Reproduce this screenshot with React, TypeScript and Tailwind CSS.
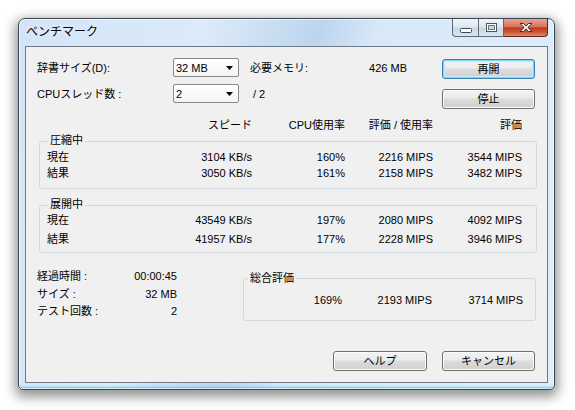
interface ResultRow {
  label: string;
  speed: string;
  usage: string;
  ratingPerUsage: string;
  rating: string;
}

const compressRows: ResultRow[] = [
  { label: "現在", speed: "3104 KB/s", usage: "160%", ratingPerUsage: "2216 MIPS", rating: "3544 MIPS" },
  { label: "結果", speed: "3050 KB/s", usage: "161%", ratingPerUsage: "2158 MIPS", rating: "3482 MIPS" },
];

const decompressRows: ResultRow[] = [
  { label: "現在", speed: "43549 KB/s", usage: "197%", ratingPerUsage: "2080 MIPS", rating: "4092 MIPS" },
  { label: "結果", speed: "41957 KB/s", usage: "177%", ratingPerUsage: "2228 MIPS", rating: "3946 MIPS" },
];

const stats = [
  { label: "経過時間 :", value: "00:00:45", gap: "" },
  { label: "サイズ :", value: "32 MB", gap: "mt-[4px]" },
  { label: "テスト回数 :", value: "2", gap: "mt-[3px]" },
];

const buttonBase =
  "flex h-[20px] items-center justify-center rounded-[3px] border bg-[linear-gradient(#f3f3f3_0%,#ebebeb_45%,#dddddd_50%,#cfcfcf_100%)]";

function Button({ label, isDefault = false, width = "w-[93px]" }: { label: string; isDefault?: boolean; width?: string }) {
  return (
    <div
      className={
        isDefault
          ? `${buttonBase} ${width} border-[#3c7fb1] shadow-[inset_0_0_0_1px_#7fd6f7,inset_0_0_0_2px_#c6ecfb]`
          : `${buttonBase} ${width} border-[#707070] shadow-[inset_0_0_0_1px_#fbfbfb]`
      }
    >
      {label}
    </div>
  );
}

function Dropdown({ value }: { value: string }) {
  return (
    <div className="flex h-[19px] w-[66px] items-center justify-between rounded-[2px] border border-[#8a8a8a] bg-[linear-gradient(#ffffff,#f4f4f4)] pl-[2px] pr-[5px]">
      <span>{value}</span>
      <svg width="7" height="4" viewBox="0 0 7 4">
        <path d="M0 0h7L3.5 4z" fill="#000" />
      </svg>
    </div>
  );
}

function Row({ row, height = "h-[16px]" }: { row: ResultRow; height?: string }) {
  return (
    <div className={`flex items-center ${height}`}>
      <span className="w-[100px]">{row.label}</span>
      <span className="w-[105px] text-right">{row.speed}</span>
      <span className="w-[93px] text-right">{row.usage}</span>
      <span className="w-[88px] text-right">{row.ratingPerUsage}</span>
      <span className="w-[89px] text-right">{row.rating}</span>
    </div>
  );
}

function CaptionButtons() {
  return (
    <div className="flex h-[18px]">
      <div className="flex w-[26px] items-end justify-center rounded-bl-[4px] border border-r-0 border-t-0 border-[#5c6977] bg-[linear-gradient(#eef4fa_0%,#dde7f1_48%,#c8d6e4_52%,#d9e5f1_100%)] pb-[3px]">
        <svg width="12" height="5" viewBox="0 0 12 5">
          <rect x="0.5" y="0.5" width="11" height="4" rx="1" fill="#fff" stroke="#3e4a57" />
        </svg>
      </div>
      <div className="flex w-[26px] items-center justify-center border border-t-0 border-[#5c6977] bg-[linear-gradient(#eef4fa_0%,#dde7f1_48%,#c8d6e4_52%,#d9e5f1_100%)]">
        <svg width="11" height="9" viewBox="0 0 11 9">
          <rect x="0.5" y="0.5" width="10" height="8" fill="#fff" stroke="#4a5866" />
          <rect x="2.5" y="2.5" width="6" height="4" fill="#c9d5e1" stroke="#6c7a88" />
        </svg>
      </div>
      <div className="flex w-[44px] items-center justify-center rounded-br-[4px] border border-l-0 border-t-0 border-[#5a2a22] bg-[linear-gradient(#e9a493_0%,#d9735c_45%,#c2391f_52%,#cf5a3c_80%,#e28a6c_100%)]">
        <svg width="16" height="11" viewBox="0 0 16 11">
          <path
            d="M2 1.5h3.5L8 4.2l2.5-2.7H14L9.8 5.5 14 9.5h-3.5L8 6.8 5.5 9.5H2l4.2-4z"
            fill="#fff"
            stroke="#3b2a28"
            strokeWidth="1"
            strokeLinejoin="round"
          />
        </svg>
      </div>
    </div>
  );
}

export default function App() {
  return (
    <div className="h-[410px] w-[575px] bg-white pl-[18px] pt-[18px] font-['Liberation_Sans','Noto_Sans_CJK_JP',sans-serif] text-[11px] leading-[14px] text-black">
      <div className="flex h-[372px] w-[537px] flex-col rounded-b-[5px] rounded-t-[7px] border border-[#3b4652] bg-[linear-gradient(105deg,#d3e4f6_0%,#dceaf9_30%,#c6dcf1_42%,#bcd5ee_48%,#d8e8f8_57%,#e2eefb_100%)] px-[6px] pb-[6px] shadow-[0_4px_12px_3px_rgba(0,0,0,0.42),inset_0_0_0_1px_rgba(255,255,255,0.65),inset_0_-3px_2px_-1px_rgba(70,195,240,0.75)]">
        <div className="flex h-[27px] items-start justify-between">
          <span className="ml-[1px] mt-[6px] text-[12px] leading-[14px] [text-shadow:0_0_6px_#fff]">ベンチマーク</span>
          <CaptionButtons />
        </div>

        <div className="flex flex-1 flex-col border border-[#6f7a86] bg-[#f0f0f0]">
          {/* settings */}
          <div className="flex justify-between pr-[12px] pt-[11px]">
            <div className="flex flex-col pl-[11px]">
              <div className="flex h-[19px] items-center">
                <span className="w-[136px]">辞書サイズ(D):</span>
                <Dropdown value="32 MB" />
                <span className="ml-[11px] w-[100px]">必要メモリ:</span>
                <span className="w-[57px] text-right">426 MB</span>
              </div>
              <div className="mt-[7px] flex h-[19px] items-center">
                <span className="w-[136px]">CPUスレッド数 :</span>
                <Dropdown value="2" />
                <span className="ml-[14px]">/ 2</span>
              </div>
            </div>
            <div className="flex flex-col gap-[10px] pt-[1px]">
              <Button label="再開" isDefault />
              <Button label="停止" />
            </div>
          </div>

          {/* column headers */}
          <div className="mt-[9px] flex pl-[21px]">
            <span className="w-[100px]" />
            <span className="w-[105px] text-right">スピード</span>
            <span className="w-[93px] text-right">CPU使用率</span>
            <span className="w-[88px] text-right">評価 / 使用率</span>
            <span className="w-[89px] text-right">評価</span>
          </div>

          <fieldset className="ml-[13px] mt-[2px] w-[498px] rounded-[3px] border border-[#d0d8de] pb-[7px] pl-[7px] pt-[1px]">
            <legend className="ml-[1px] px-[2px] pb-[2px] leading-[12px]">圧縮中</legend>
            {compressRows.map((row) => (
              <Row key={row.label} row={row} />
            ))}
          </fieldset>

          <fieldset className="ml-[13px] mt-[9px] w-[498px] rounded-[3px] border border-[#d0d8de] pb-[5px] pl-[7px]">
            <legend className="ml-[1px] px-[2px] pb-[2px] leading-[12px]">展開中</legend>
            <Row row={decompressRows[0]} />
            <div className="mt-[3px]">
              <Row row={decompressRows[1]} />
            </div>
          </fieldset>

          {/* summary */}
          <div className="mt-[16px] flex">
            <div className="flex w-[151px] flex-col pl-[11px]">
              {stats.map((stat) => (
                <div key={stat.label} className={`flex justify-between ${stat.gap}`}>
                  <span>{stat.label}</span>
                  <span>{stat.value}</span>
                </div>
              ))}
            </div>
            <fieldset className="ml-[66px] mt-[2px] w-[293px] rounded-[3px] border border-[#d0d8de] pb-[13px] pt-[8px]">
              <legend className="ml-[4px] px-[2px] leading-[14px]">総合評価</legend>
              <div className="flex">
                <span className="w-[98px] text-right">169%</span>
                <span className="w-[90px] text-right">2193 MIPS</span>
                <span className="w-[91px] text-right">3714 MIPS</span>
              </div>
            </fieldset>
          </div>

          <div className="mt-[30px] flex justify-end gap-[15px] pr-[12px]">
            <Button label="ヘルプ" width="w-[94px]" />
            <Button label="キャンセル" />
          </div>
        </div>
      </div>
    </div>
  );
}
